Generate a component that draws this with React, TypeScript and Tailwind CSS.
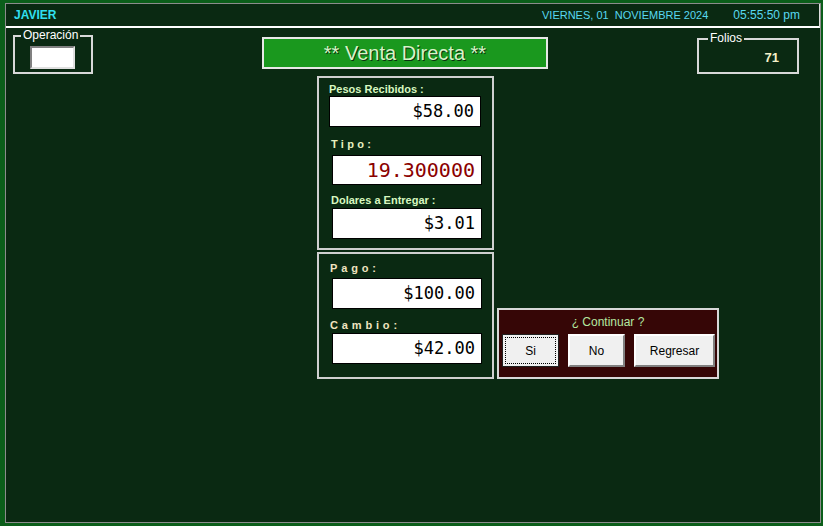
import React from "react";

const sans = { fontFamily: '"Liberation Sans", Arial, sans-serif' };
const mono = { fontFamily: '"DejaVu Sans Mono", "Liberation Mono", monospace' };

function Field({ value, w, ml, mt, h, red }: { value: string; w: string; ml: string; mt: string; h: string; red?: boolean }) {
  return (
    <div
      className={`bg-white border border-black flex items-center justify-end pr-[6px] ${w} ${ml} ${mt} ${h} ${red ? "text-[20px] text-[#8b0000]" : "text-[17px] text-black"}`}
      style={mono}
    >
      {value}
    </div>
  );
}

export default function App() {
  return (
    <div className="w-[823px] h-[526px] bg-[#0b5e1a] pt-[3px] pl-[5px] pr-[2px] pb-[3px]" style={sans}>
      <div className="h-full border border-[#8c8c8c] bg-[#0a2912] flex flex-col">
        {/* header */}
        <div className="h-[24px] border-b-2 border-white border-r border-r-[#e0e0e0] flex items-center pl-[8px] pr-[19px] shrink-0">
          <span className="text-[12px] font-bold text-[#30e0f0]">JAVIER</span>
          <span className="ml-auto text-[11px] text-[#58d8f0] whitespace-pre">VIERNES, 01  NOVIEMBRE 2024</span>
          <span className="ml-[25px] text-[12px] text-[#58d8f0]">05:55:50 pm</span>
        </div>

        {/* top row */}
        <div className="flex items-start">
          <div className="relative ml-[7px] mt-[7px] w-[80px] h-[39px] border-2 border-[#d8d8d8] flex items-start">
            <span className="absolute left-[6px] top-[-8px] px-[2px] bg-[#0a2912] text-[12px] leading-[12px] text-white">
              Operación
            </span>
            <div className="ml-[15px] mt-[9px] w-[45px] h-[23px] bg-white border-2 border-t-[#808080] border-l-[#808080] border-b-[#e0e0e0] border-r-[#e0e0e0]" />
          </div>
          <div className="ml-[169px] mt-[9px] w-[286px] h-[32px] bg-[#1a981e] border-2 border-[#e8e8e8] flex items-center justify-center">
            <span className="text-[20px] leading-[22px] text-[#d8f4c8] [text-shadow:1px_1px_0_#0a3010]">** Venta Directa **</span>
          </div>
          <div className="relative ml-[149px] mt-[10px] w-[102px] h-[36px] border-2 border-[#d8d8d8] flex items-center justify-end pr-[18px]">
            <span className="absolute left-[9px] top-[-8px] px-[2px] bg-[#0a2912] text-[12px] leading-[12px] text-white">
              Folios
            </span>
            <span className="mt-[4px] text-[13px] font-bold text-[#f4f0c8]">71</span>
          </div>
        </div>

        {/* main row */}
        <div className="flex items-end ml-[311px] mt-[2px]">
          <div className="flex flex-col w-[177px]">
            <div className="h-[174px] border-2 border-[#d0d0d0] flex flex-col items-start">
              <div className="ml-[10px] mt-[5px] text-[11px] leading-[12px] font-bold text-[#d8f8c0]">Pesos Recibidos :</div>
              <Field value="$58.00" w="w-[152px]" h="h-[31px]" ml="ml-[10px]" mt="mt-[1px]" />
              <div className="ml-[12px] mt-[11px] text-[11px] leading-[12px] font-bold tracking-[0.3em] text-[#e8f0c0]">Tipo:</div>
              <Field value="19.300000" w="w-[150px]" h="h-[30px]" ml="ml-[13px]" mt="mt-[5px]" red />
              <div className="ml-[12px] mt-[9px] text-[11px] leading-[12px] font-bold text-[#d8f8c0]">Dolares a Entregar :</div>
              <Field value="$3.01" w="w-[150px]" h="h-[31px]" ml="ml-[13px]" mt="mt-[2px]" />
            </div>
            <div className="mt-[2px] h-[127px] border-2 border-[#d0d0d0] flex flex-col items-start">
              <div className="ml-[11px] mt-[8px] text-[11px] leading-[12px] font-bold tracking-[0.35em] text-[#f0e4c0]">Pago:</div>
              <Field value="$100.00" w="w-[150px]" h="h-[31px]" ml="ml-[13px]" mt="mt-[4px]" />
              <div className="ml-[11px] mt-[10px] text-[11px] leading-[12px] font-bold tracking-[0.35em] text-[#f0e4c0]">Cambio:</div>
              <Field value="$42.00" w="w-[150px]" h="h-[31px]" ml="ml-[13px]" mt="mt-[2px]" />
            </div>
          </div>

          <div className="ml-[3px] w-[222px] h-[71px] border-2 border-[#d8d8d8] bg-[#360606] flex flex-col">
            <div className="pt-[5px] text-center text-[12px] leading-[14px] text-[#b4e8a0]">¿ Continuar ?</div>
            <div className="flex mt-[5px] ml-[3px]">
              <div className="w-[57px] h-[33px] bg-[#f0f0f0] border border-[#202020] p-[2px]">
                <div className="w-full h-full border border-dotted border-black flex items-center justify-center text-[12px] text-black">
                  Si
                </div>
              </div>
              <div className="ml-[9px] w-[57px] h-[33px] bg-[#f0f0f0] border-2 border-t-white border-l-white border-b-[#808080] border-r-[#808080] flex items-center justify-center text-[12px] text-black">
                No
              </div>
              <div className="ml-[9px] w-[81px] h-[33px] bg-[#f0f0f0] border-2 border-t-white border-l-white border-b-[#808080] border-r-[#808080] flex items-center justify-center text-[12px] text-black">
                Regresar
              </div>
            </div>
          </div>
        </div>
      </div>
    </div>
  );
}
